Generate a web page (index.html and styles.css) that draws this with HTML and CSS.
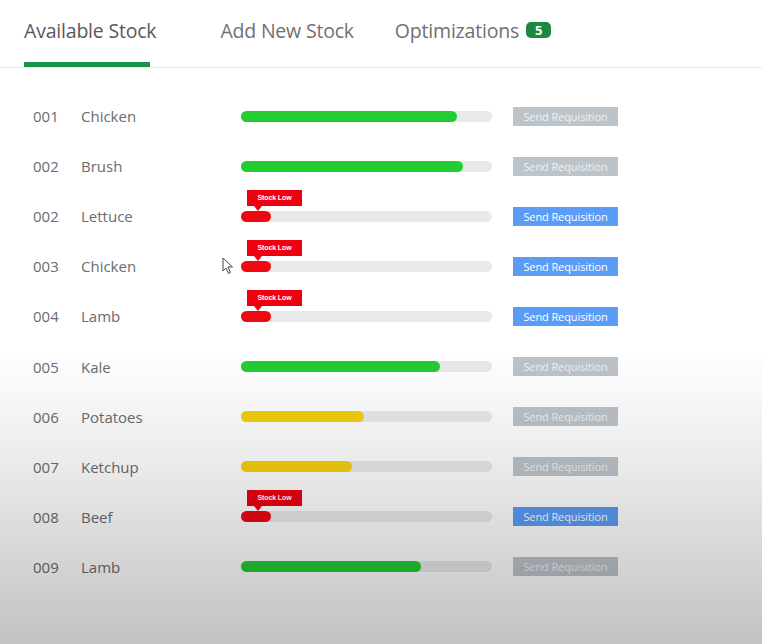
FILE: index.html
```html
<!DOCTYPE html>
<html>
<head>
<meta charset="utf-8">
<link rel="stylesheet" href="styles.css">
</head>
<body>
<div class="page">
  <nav class="tabs">
    <div class="tab tab-active">Available Stock</div>
    <div class="tab tab-add">Add New Stock</div>
    <div class="tab">Optimizations <span class="badge">5</span></div>
  </nav>
  <div class="list">
    <div class="row"><span class="id">001</span><span class="name">Chicken</span><div class="bar"><div class="fill green" style="width:216px"></div></div><button class="btn off">Send Requisition</button></div>
    <div class="row"><span class="id">002</span><span class="name">Brush</span><div class="bar"><div class="fill green" style="width:222px"></div></div><button class="btn off">Send Requisition</button></div>
    <div class="row"><span class="id">002</span><span class="name">Lettuce</span><div class="bar"><div class="tip">Stock Low</div><div class="fill red" style="width:30px"></div></div><button class="btn on">Send Requisition</button></div>
    <div class="row"><span class="id">003</span><span class="name">Chicken</span><div class="bar"><div class="tip">Stock Low</div><div class="fill red" style="width:30px"></div></div><button class="btn on">Send Requisition</button>
      <svg class="cursor" width="12" height="18" viewBox="0 0 12 18"><path d="M1 1 L1 14 L4 11 L6.5 16.5 L8.5 15.5 L6 10 L10.5 10 Z" fill="#fff" stroke="#444" stroke-width="1"/></svg>
    </div>
    <div class="row"><span class="id">004</span><span class="name">Lamb</span><div class="bar"><div class="tip">Stock Low</div><div class="fill red" style="width:30px"></div></div><button class="btn on">Send Requisition</button></div>
    <div class="row"><span class="id">005</span><span class="name">Kale</span><div class="bar"><div class="fill green" style="width:199px"></div></div><button class="btn off">Send Requisition</button></div>
    <div class="row"><span class="id">006</span><span class="name">Potatoes</span><div class="bar"><div class="fill yellow" style="width:123px"></div></div><button class="btn off">Send Requisition</button></div>
    <div class="row"><span class="id">007</span><span class="name">Ketchup</span><div class="bar"><div class="fill yellow" style="width:111px"></div></div><button class="btn off">Send Requisition</button></div>
    <div class="row"><span class="id">008</span><span class="name">Beef</span><div class="bar"><div class="tip">Stock Low</div><div class="fill red" style="width:30px"></div></div><button class="btn on">Send Requisition</button></div>
    <div class="row"><span class="id">009</span><span class="name">Lamb</span><div class="bar"><div class="fill green" style="width:180px"></div></div><button class="btn off">Send Requisition</button></div>
  </div>
</div>
<div class="shade"></div>
</body>
</html>
```
FILE: styles.css
```css
html, body {
  margin: 0;
  padding: 0;
  height: 100%;
  background: #ffffff;
  overflow: hidden;
}
body {
  font-family: "Open Sans", "Noto Sans", sans-serif;
  color: #666;
}
.page {
  width: 762px;
  height: 644px;
}
.tabs {
  display: flex;
  height: 68px;
  border-bottom: 1px solid #ececee;
  padding-left: 24px;
  box-sizing: border-box;
}
.tab {
  position: relative;
  font-size: 19.5px;
  color: #707074;
  margin-right: 64px;
  display: flex;
  align-items: center;
  height: 67px;
  padding-bottom: 7px;
  box-sizing: border-box;
  letter-spacing: -0.2px;
  white-space: nowrap;
}
.tab-active {
  color: #58585c;
}
.tab-active::after {
  content: "";
  position: absolute;
  left: 0;
  bottom: 0;
  width: 126px;
  height: 5px;
  background: #1a9447;
}
.tab-add {
  margin-right: 41px;
}
.badge {
  display: inline-block;
  margin-left: 7px;
  background: #1b8a3e;
  color: #fff;
  font-size: 13px;
  font-weight: 700;
  line-height: 16px;
  height: 16px;
  padding: 0 9px;
  border-radius: 5px;
  letter-spacing: 0;
}
.list {
  padding-top: 23px;
}
.row {
  position: relative;
  display: flex;
  align-items: center;
  height: 50.1px;
  padding-left: 33px;
}
.id {
  width: 48px;
  font-size: 15px;
  color: #6b6b70;
}
.name {
  width: 160px;
  font-size: 15px;
  color: #6b6b70;
}
.bar {
  position: relative;
  width: 251px;
  height: 11px;
  border-radius: 6px;
  background: #e9e9eb;
  margin-right: 21px;
}
.fill {
  height: 100%;
  border-radius: 6px;
}
.green { background: #22cc33; }
.yellow { background: #f4d00e; }
.red { background: #ee0812; }
.tip {
  position: absolute;
  left: 6px;
  bottom: 16px;
  width: 55px;
  height: 16px;
  background: #ee0010;
  color: #fff;
  font-family: "Liberation Sans", Arial, sans-serif;
  font-size: 7px;
  font-weight: 700;
  line-height: 16px;
  text-align: center;
  letter-spacing: -0.1px;
}
.tip::after {
  content: "";
  position: absolute;
  left: 7px;
  top: 16px;
  border-left: 4px solid transparent;
  border-right: 4px solid transparent;
  border-top: 5px solid #ee0010;
}
.btn {
  width: 105px;
  height: 19px;
  border: none;
  padding: 0;
  font-family: "Open Sans", "Noto Sans", sans-serif;
  font-size: 11px;
  letter-spacing: -0.1px;
}
.btn.off {
  background: #bcc3c9;
  color: #eef1f3;
}
.btn.on {
  background: #5b9cf7;
  color: #ffffff;
}
.cursor {
  position: absolute;
  left: 222px;
  top: 16px;
}
.shade {
  position: absolute;
  left: 0;
  top: 0;
  width: 762px;
  height: 644px;
  pointer-events: none;
  background: linear-gradient(to bottom, rgba(0,0,0,0) 0%, rgba(0,0,0,0) 54%, rgba(0,0,0,0.07) 70%, rgba(0,0,0,0.24) 100%);
}
```
